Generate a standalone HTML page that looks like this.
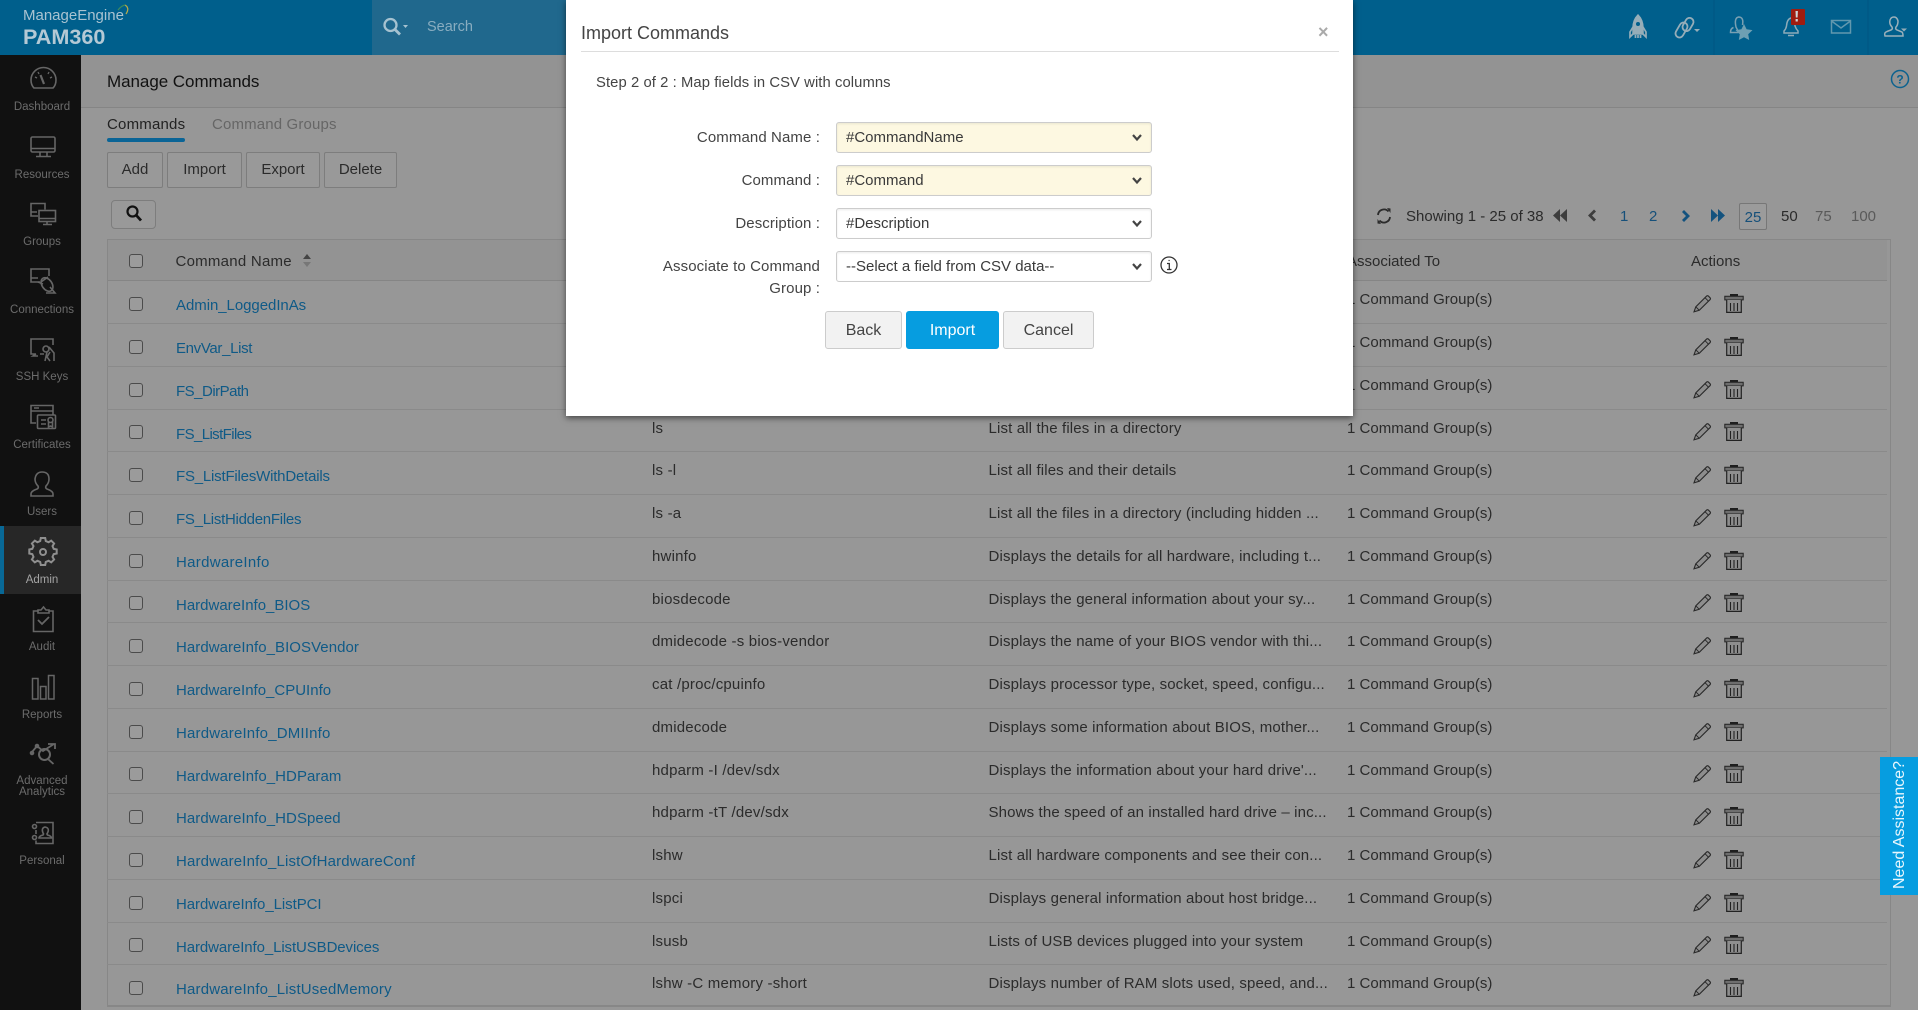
<!DOCTYPE html>
<html lang="en"><head><meta charset="utf-8"><title>Manage Commands</title>
<style>
html,body{margin:0;padding:0;width:1918px;height:1010px;overflow:hidden;background:#979797;font-family:"Liberation Sans",sans-serif;font-size:15px;color:#2b2b2b}
div,span,svg{position:absolute;white-space:nowrap;line-height:20px;display:block}
.r{left:107px;width:1780px;height:42px;margin-top:1px;border-bottom:1px solid #8a8a8a}
.c{left:22px;width:12px;height:12px;border:1.5px solid #4b4b4b;border-radius:3px;background:#9b9b9b;top:16px}
.n{left:69px;top:15.4px;color:#0f5a87}
.m{left:545px;top:9.4px;letter-spacing:.2px}
.d{left:881.5px;top:9.4px;letter-spacing:.14px}
.a{left:1240px;top:9.4px;letter-spacing:.02px}
.p{left:1586px;top:13px;width:19px;height:19px}
.t{left:1617px;top:13px;width:20px;height:19px}
.btn{top:152px;height:34px;border:1px solid #7d7d7d;border-radius:2px;text-align:center;line-height:34px;color:#2b2b2b;background:#999}
.lab{font-size:11.5px;width:81px;left:1.5px;text-align:center;color:#6c6c6c;line-height:14px}
.sel{left:836px;width:314px;height:29px;border:1px solid #ccc;border-radius:3px;box-shadow:inset 0 1px 2px rgba(0,0,0,.08);background:#fff;color:#3a3a3a;line-height:29px;text-indent:9px}
.y{background:#fdf8e1}
.fl{left:596px;width:224px;text-align:right;color:#444;font-size:15px;letter-spacing:.1px}
.chev{width:12px;height:9px;position:absolute;left:294px;top:10px}
.mb{top:311px;height:36px;border:1px solid #ccc;border-radius:3px;text-align:center;line-height:37px;font-size:16px;background:#f2f2f2;color:#444}
.pg{top:207px;color:#2b2b2b}
</style></head><body>
<svg width="0" height="0" style="position:absolute"><defs>
<symbol id="pen" viewBox="0 0 19 19"><path d="M1 17.800L2.800 12.800 13.500 2.200Q14.500 1.200 15.500 2.200L17 3.700Q18 4.700 17 5.700L6.300 16.300Z" fill="#8d8d8d" stroke="#2a2a2a" stroke-width="1.100"/><path d="M12 3.700l3.500 3.500M2.800 12.800l3.500 3.500" fill="none" stroke="#2a2a2a" stroke-width="1"/></symbol>
<symbol id="tr" viewBox="0 0 20 19"><path d="M6 0h8v2H6z" fill="#1e1e1e"/><path d="M.8 2.300h18.400v3.600H.8z" fill="#6e6e6e" stroke="#222" stroke-width="1"/><path d="M2.700 5.900V18.400h14.600V5.900" fill="#8e8e8e" stroke="#222" stroke-width="1.200"/><path d="M6.500 9v8M10 9v8M13.500 9v8" stroke="#222" stroke-width="1.100"/></symbol>
<symbol id="ch" viewBox="0 0 12 9"><path d="M2 2l4 4.500L10 2" fill="none" stroke="#444" stroke-width="2.200"/></symbol>
</defs></svg>

<div style="left:0;top:0;width:1918px;height:55px;background:#005f8c"></div>
<div style="left:372px;top:0;width:200px;height:55px;background:#20688d"></div>
<div style="left:23px;top:6px;font-size:15px;color:#a9c3d1">ManageEngine</div>
<div style="left:23px;top:26px;font-size:21.6px;font-weight:bold;color:#b4c9d5;line-height:22px">PAM360</div>
<svg style="left:110px;top:3px" width="24" height="20"><path d="M15 2q5 3 1 9" fill="none" stroke="#b4a94a" stroke-width="1.300"/><path d="M8 7q3-4 7-5" fill="none" stroke="#3c8a5e" stroke-width="1.200"/></svg>
<div style="left:427px;top:17px;font-size:14.5px;color:#89adc0">Search</div>
<svg style="left:380px;top:14px" width="30" height="24" fill="none" stroke="#a6c2d0"><circle cx="10.500" cy="11" r="6" stroke-width="2.300"/><path d="M15 15.500l5 5" stroke-width="2.800"/><path d="M23 11h5l-2.500 3z" fill="#a6c2d0" stroke="none"/></svg>

<svg style="left:1620px;top:0" width="298" height="55" fill="none" stroke="#96adb8" stroke-width="1.500">
<path d="M18 15q-5 5-5 13v6h10v-6q0-8-5-13z" fill="#96adb8"/><circle cx="18" cy="24" r="2" fill="#005f8c" stroke="none"/><path d="M13 27l-3 5v5l3-3M23 27l3 5v5l-3-3M15.500 35v3M18 35v3M20.500 35v3" stroke-width="1.700"/>
<g stroke-width="1.800"><rect x="57.500" y="22" width="8" height="16" rx="4" transform="rotate(30 61.500 30)"/><rect x="64" y="17.500" width="8" height="14" rx="4" transform="rotate(30 68 24.500)"/></g><path d="M74 29h6l-3 3z" fill="#96adb8" stroke="none"/>
<path d="M94 0v55M248 0v55" stroke="#005682" stroke-width="1"/>
<path d="M118 31l-2-4q-2-9 2.500-10 5.500 0 4 8M113.500 27.500q-3 1-3 5h8" stroke="#7aa0b2"/><path d="M124 24l2.600 5.300 5.900.8-4.300 4.100 1 5.800-5.200-2.700-5.200 2.700 1-5.800-4.300-4.100 5.900-.8z" fill="#6e9fb3" stroke="none"/>
<path d="M164 33H178v-2q-2-2-3-5 0-7-4-8-4 1-4.500 8-.5 3-2.500 5zM168 35.500h6" stroke="#8dabb9"/><path d="M172 9h12q1 0 1 1v14q0 1-1 1h-12q-1 0-1-1v-14q0-1 1-1z" fill="#9f1c10" stroke="none"/><path d="M175.500 11h2.400l-.3 6.500h-1.800zM175.600 19h2.200v2.500h-2.200z" fill="#cfd6d8" stroke="none"/>
<rect x="211.500" y="20.500" width="19" height="12.500" stroke="#6298ae"/><path d="M211.500 21l9.500 7 9.500-7" stroke="#6298ae"/>
<path d="M265 36q-1-3 1-4 2-1 5-2 2-1 1-3-3-3-2-7 1-3 4-3t4 4q0 4-2 6-1 2 1 3l5 2q1 1 1 4zM265 36h18" stroke="#9bb0ba"/><path d="M281 28.500h6l-3 3z" fill="#96adb8" stroke="none"/>
</svg>

<div style="left:0;top:55px;width:81px;height:955px;background:#111"></div>
<div style="left:0;top:526px;width:81px;height:68px;background:#272727"></div>
<div style="left:0;top:526px;width:4px;height:68px;background:#086896"></div>
<svg style="left:0;top:55px" width="81" height="955" fill="none" stroke="#666" stroke-width="1.600">
<g transform="translate(0,-55)">
<path d="M34 88q-3-3-3-8a12.500 12.500 0 0 1 25 0q0 5-3 8z"/><path d="M40.500 75l3.500 9" stroke-width="2.200"/><path d="M35 77l2 1M38 72l1 2M52 77l-2 1M49 72l-1 2" stroke-width="1.300"/>
<rect x="31" y="137" width="24" height="15" rx="1.500"/><path d="M31 148.500h24M40 152v4M47 152v4M36 156.500h15"/>
<path d="M38 216h-7v-12.500h14v6M31 212h6"/><rect x="39" y="210.500" width="16.500" height="11"/><path d="M39 218.500h16.500M47 221.500v2.500M43 224.500h9"/>
<path d="M40 282H31v-13h18v7M31 278h7"/><ellipse cx="47" cy="284.500" rx="5" ry="7.500" transform="rotate(-35 47 284.500)"/><path d="M46 293h9l-5-6M41 282l7-5M38 282l5 2"/>
<path d="M36 354h-5v-15h22v6M40 354h4M36 354l-3 2h5"/><circle cx="46" cy="349" r="3"/><path d="M49 347l5 6v8M47 352l-2 9M50 352l-3 5 3 4"/>
<path d="M36 423h-5v-17.500h22v9M31 411h22"/><rect x="37.500" y="415" width="18" height="13.500" rx="1"/><path d="M41 420h5M41 424h5M34 408h5"/><circle cx="50.500" cy="420" r="2.500"/><path d="M48.500 422v5l2-1 2 1v-5"/>
<path d="M31 496v-2q0-3 6-5 2-1 1-3-3-3-3-7 1-7 7-7 7 0 7 7 0 4-3 7-1 2 1 3 6 2 6 5v2z"/>
<g stroke="#8f8f8f" stroke-width="2"><circle cx="43" cy="552" r="3"/><path d="M40.800 540.500h4.400l.6 3 2.800 1.200 2.600-1.600 2.900 2.900-1.600 2.600 1.200 2.800 3 .6v4l-3 .6-1.200 2.800 1.600 2.600-2.900 2.900-2.600-1.600-2.800 1.200-.6 3h-4.400l-.6-3-2.800-1.200-2.600 1.600-2.900-2.900 1.600-2.600-1.200-2.800-3-.6v-4l3-.6 1.200-2.800-1.600-2.600 2.900-2.900 2.600 1.600 2.800-1.200z" transform="translate(0,-2.500)"/></g>
<path d="M38 611h-4.500v20.500h19.500v-20.500h-4.500M38 613h11v-3h-3l-2.500-3-2.500 3h-3z"/><path d="M38 620l4 4 7-7" stroke-width="1.800"/>
<path d="M32.500 699v-20.500h5.500v20.500zM40.500 699v-12.500h5.500v12.500zM48.500 699v-23.500h5.500v23.500z" stroke-width="1.500"/>
<circle cx="44.500" cy="754.500" r="5.500" stroke-width="2"/><path d="M48.500 759.500l5 4.500M32 752l5-6 6 5 11-7M48 744h7v5" stroke-width="1.800"/><circle cx="32" cy="753" r="1.500" fill="#666"/><circle cx="37" cy="746" r="1.500" fill="#666"/>
<path d="M36 822.500h17v21H36v-3M36 830v4"/><circle cx="34.500" cy="826.500" r="2"/><circle cx="34.500" cy="837.500" r="2"/><path d="M39 838q0-2 4-3 1-1 0-2-2-5 2-6 5 1 2.500 6-1 1 0 2 4 1 4 3z"/>
</g></svg>
<div class="lab" style="top:100px">Dashboard</div>
<div class="lab" style="top:168px">Resources</div>
<div class="lab" style="top:235px">Groups</div>
<div class="lab" style="top:303px">Connections</div>
<div class="lab" style="top:370px">SSH Keys</div>
<div class="lab" style="top:438px">Certificates</div>
<div class="lab" style="top:505px">Users</div>
<div class="lab" style="top:573px;color:#a4a4a4">Admin</div>
<div class="lab" style="top:640px">Audit</div>
<div class="lab" style="top:708px">Reports</div>
<div class="lab" style="top:776px;line-height:11px">Advanced<br>Analytics</div>
<div class="lab" style="top:854px">Personal</div>

<div style="left:81px;top:55px;width:1837px;height:52px;background:#939393;border-bottom:1px solid #858585"></div>
<div style="left:107px;top:71.500px;font-size:17px;color:#111;letter-spacing:-.05px">Manage Commands</div>
<svg style="left:1890px;top:69px" width="20" height="20" fill="none" stroke="#0c628f"><circle cx="10" cy="10" r="8.500" stroke-width="1.500"/><text x="10" y="14.500" text-anchor="middle" font-family="Liberation Sans" font-size="12" font-weight="bold" fill="#0c628f" stroke="none">?</text></svg>
<div style="left:107px;top:115px;color:#222;letter-spacing:.2px">Commands</div>
<div style="left:107px;top:138px;width:78px;height:4px;background:#0a6496;border-radius:2px"></div>
<div style="left:212px;top:115px;color:#666;letter-spacing:.15px">Command Groups</div>
<div class="btn" style="left:107px;width:54px">Add</div>
<div class="btn" style="left:167px;width:73px">Import</div>
<div class="btn" style="left:246px;width:72px">Export</div>
<div class="btn" style="left:324px;width:71px">Delete</div>
<div class="btn" style="left:111px;top:200px;width:43px;height:27px;border-radius:4px"></div>
<svg style="left:125px;top:204px" width="18" height="19" fill="none" stroke="#111"><circle cx="7.500" cy="7.500" r="5" stroke-width="2.200"/><path d="M11.500 11.500l4.500 5" stroke-width="2.800"/></svg>

<svg style="left:1375px;top:206px" width="18" height="20" fill="none" stroke="#2b2b2b" stroke-width="1.800"><path d="M3 9a6 6 0 0 1 10.500-3.500M15 11a6 6 0 0 1-10.500 3.500"/><path d="M12 2l3.500.5V7zM6 18l-3.500-.5V13z" fill="#2b2b2b" stroke="none"/></svg>
<div class="pg" style="left:1406px;font-size:15px">Showing 1 - 25 of 38</div>
<svg style="left:1552px;top:208px" width="180" height="16"><g fill="#3d3d3d"><path d="M8 1v13L1 7.500zM15 1v13L8 7.500z"/><path d="M42 2l2 2-4 4 4 4-2 2-6-6z" transform="translate(0,-.5)"/></g><g fill="#13527e"><path d="M132 2l-2 2 4 4-4 4 2 2 6-6z"/><path d="M159 1v13l7-6.500zM166 1v13l7-6.500z"/></g></svg>
<div class="pg" style="left:1620px;color:#16507a">1</div>
<div class="pg" style="left:1649px;color:#16507a">2</div>
<div style="left:1739px;top:203px;width:26px;height:25px;border:1px solid #777;border-radius:2px;background:#9b9b9b;color:#16507a;text-align:center;line-height:27px">25</div>
<div class="pg" style="left:1781px">50</div>
<div class="pg" style="left:1815px;color:#5a5a5a">75</div>
<div class="pg" style="left:1851px;color:#5a5a5a">100</div>

<div style="left:107px;top:239px;width:1784px;height:768px;border:1px solid #878787;border-bottom-width:2px;box-sizing:border-box"></div>
<div style="left:108px;top:240px;width:1779px;height:40px;background:#939393;border-bottom:1px solid #858585"></div>
<div class="c" style="left:129px;top:254px"></div>
<div style="left:175.500px;top:252px;color:#2b2b2b;letter-spacing:.25px">Command Name</div>
<svg style="left:302px;top:254px" width="10" height="14"><path d="M5 0l4 5H1z" fill="#444"/><path d="M5 13l4-5H1z" fill="#777"/></svg>
<div style="left:1347px;top:252px">Associated To</div>
<div style="left:1691px;top:252px">Actions</div>

<div class="r" style="top:280px"><div class="c"></div><div class="n" style="letter-spacing:-.05px">Admin_LoggedInAs</div><div class="a">1 Command Group(s)</div><svg class="p"><use href="#pen"/></svg><svg class="t"><use href="#tr"/></svg></div>
<div class="r" style="top:322.75px"><div class="c"></div><div class="n" style="letter-spacing:-.33px">EnvVar_List</div><div class="a">1 Command Group(s)</div><svg class="p"><use href="#pen"/></svg><svg class="t"><use href="#tr"/></svg></div>
<div class="r" style="top:365.5px"><div class="c"></div><div class="n" style="letter-spacing:-.5px">FS_DirPath</div><div class="a">1 Command Group(s)</div><svg class="p"><use href="#pen"/></svg><svg class="t"><use href="#tr"/></svg></div>
<div class="r" style="top:408.25px"><div class="c"></div><div class="n" style="letter-spacing:-.6px">FS_ListFiles</div><div class="m">ls</div><div class="d">List all the files in a directory</div><div class="a">1 Command Group(s)</div><svg class="p"><use href="#pen"/></svg><svg class="t"><use href="#tr"/></svg></div>
<div class="r" style="top:451px"><div class="c"></div><div class="n" style="letter-spacing:-.2px">FS_ListFilesWithDetails</div><div class="m">ls -l</div><div class="d">List all files and their details</div><div class="a">1 Command Group(s)</div><svg class="p"><use href="#pen"/></svg><svg class="t"><use href="#tr"/></svg></div>
<div class="r" style="top:493.75px"><div class="c"></div><div class="n" style="letter-spacing:-.27px">FS_ListHiddenFiles</div><div class="m">ls -a</div><div class="d">List all the files in a directory (including hidden ...</div><div class="a">1 Command Group(s)</div><svg class="p"><use href="#pen"/></svg><svg class="t"><use href="#tr"/></svg></div>
<div class="r" style="top:536.5px"><div class="c"></div><div class="n" style="letter-spacing:.3px">HardwareInfo</div><div class="m">hwinfo</div><div class="d">Displays the details for all hardware, including t...</div><div class="a">1 Command Group(s)</div><svg class="p"><use href="#pen"/></svg><svg class="t"><use href="#tr"/></svg></div>
<div class="r" style="top:579.25px"><div class="c"></div><div class="n">HardwareInfo_BIOS</div><div class="m">biosdecode</div><div class="d">Displays the general information about your sy...</div><div class="a">1 Command Group(s)</div><svg class="p"><use href="#pen"/></svg><svg class="t"><use href="#tr"/></svg></div>
<div class="r" style="top:622px"><div class="c"></div><div class="n" style="letter-spacing:.05px">HardwareInfo_BIOSVendor</div><div class="m">dmidecode -s bios-vendor</div><div class="d">Displays the name of your BIOS vendor with thi...</div><div class="a">1 Command Group(s)</div><svg class="p"><use href="#pen"/></svg><svg class="t"><use href="#tr"/></svg></div>
<div class="r" style="top:664.75px"><div class="c"></div><div class="n">HardwareInfo_CPUInfo</div><div class="m">cat /proc/cpuinfo</div><div class="d">Displays processor type, socket, speed, configu...</div><div class="a">1 Command Group(s)</div><svg class="p"><use href="#pen"/></svg><svg class="t"><use href="#tr"/></svg></div>
<div class="r" style="top:707.5px"><div class="c"></div><div class="n" style="letter-spacing:.18px">HardwareInfo_DMIInfo</div><div class="m">dmidecode</div><div class="d">Displays some information about BIOS, mother...</div><div class="a">1 Command Group(s)</div><svg class="p"><use href="#pen"/></svg><svg class="t"><use href="#tr"/></svg></div>
<div class="r" style="top:750.25px"><div class="c"></div><div class="n" style="letter-spacing:.06px">HardwareInfo_HDParam</div><div class="m">hdparm -I /dev/sdx</div><div class="d">Displays the information about your hard drive'...</div><div class="a">1 Command Group(s)</div><svg class="p"><use href="#pen"/></svg><svg class="t"><use href="#tr"/></svg></div>
<div class="r" style="top:793px"><div class="c"></div><div class="n" style="letter-spacing:.06px">HardwareInfo_HDSpeed</div><div class="m">hdparm -tT /dev/sdx</div><div class="d">Shows the speed of an installed hard drive – inc...</div><div class="a">1 Command Group(s)</div><svg class="p"><use href="#pen"/></svg><svg class="t"><use href="#tr"/></svg></div>
<div class="r" style="top:835.75px"><div class="c"></div><div class="n" style="letter-spacing:.16px">HardwareInfo_ListOfHardwareConf</div><div class="m">lshw</div><div class="d">List all hardware components and see their con...</div><div class="a">1 Command Group(s)</div><svg class="p"><use href="#pen"/></svg><svg class="t"><use href="#tr"/></svg></div>
<div class="r" style="top:878.5px"><div class="c"></div><div class="n" style="letter-spacing:-.06px">HardwareInfo_ListPCI</div><div class="m">lspci</div><div class="d">Displays general information about host bridge...</div><div class="a">1 Command Group(s)</div><svg class="p"><use href="#pen"/></svg><svg class="t"><use href="#tr"/></svg></div>
<div class="r" style="top:921.25px"><div class="c"></div><div class="n" style="letter-spacing:-.1px">HardwareInfo_ListUSBDevices</div><div class="m">lsusb</div><div class="d">Lists of USB devices plugged into your system</div><div class="a">1 Command Group(s)</div><svg class="p"><use href="#pen"/></svg><svg class="t"><use href="#tr"/></svg></div>
<div class="r" style="top:964px;border-bottom:0"><div class="c"></div><div class="n" style="letter-spacing:.18px">HardwareInfo_ListUsedMemory</div><div class="m">lshw -C memory -short</div><div class="d">Displays number of RAM slots used, speed, and...</div><div class="a">1 Command Group(s)</div><svg class="p"><use href="#pen"/></svg><svg class="t"><use href="#tr"/></svg></div>

<div style="left:1880px;top:757px;width:38px;height:138px;background:#069de0"></div>
<div style="left:1880px;top:757px;width:38px;height:138px;overflow:hidden"><div style="left:20px;top:132px;transform-origin:0 0;transform:rotate(-90deg) translateY(-11px);color:#e8f6fd;font-size:16px;line-height:22px">Need Assistance?</div></div>

<div style="left:566px;top:0;width:787px;height:416px;background:#fff;box-shadow:0 2px 6px rgba(0,0,0,.55)"></div>
<div style="left:581px;top:23px;font-size:18px;color:#444">Import Commands</div>
<div style="left:581px;top:51px;width:758px;height:1px;background:#ddd"></div>
<div style="left:1318px;top:22px;font-size:18px;font-weight:bold;color:#aaa">×</div>
<div style="left:596px;top:73px;color:#444;font-size:14.800px;letter-spacing:.08px">Step 2 of 2 : Map fields in CSV with columns</div>
<div class="fl" style="top:128px">Command Name :</div>
<div class="fl" style="top:171px">Command :</div>
<div class="fl" style="top:214px">Description :</div>
<div class="fl" style="top:257px">Associate to Command</div>
<div class="fl" style="top:279px">Group :</div>
<div class="sel y" style="top:122px">#CommandName<svg class="chev" viewBox="0 0 12 9"><use href="#ch"/></svg></div>
<div class="sel y" style="top:165px">#Command<svg class="chev" viewBox="0 0 12 9"><use href="#ch"/></svg></div>
<div class="sel" style="top:208px">#Description<svg class="chev" viewBox="0 0 12 9"><use href="#ch"/></svg></div>
<div class="sel" style="top:251px">--Select a field from CSV data--<svg class="chev" viewBox="0 0 12 9"><use href="#ch"/></svg></div>
<svg style="left:1160px;top:256px" width="18" height="18" fill="none" stroke="#333"><circle cx="9" cy="9" r="8" stroke-width="1.300"/><path d="M7 7.500h2.300v5.500M7 13.500h4.500M8.500 4.500h1.200" stroke-width="1.300"/></svg>
<div class="mb" style="left:825px;width:75px">Back</div>
<div class="mb" style="left:906px;width:91px;background:#069de0;border-color:#069de0;color:#fff">Import</div>
<div class="mb" style="left:1003px;width:89px">Cancel</div>
</body></html>
